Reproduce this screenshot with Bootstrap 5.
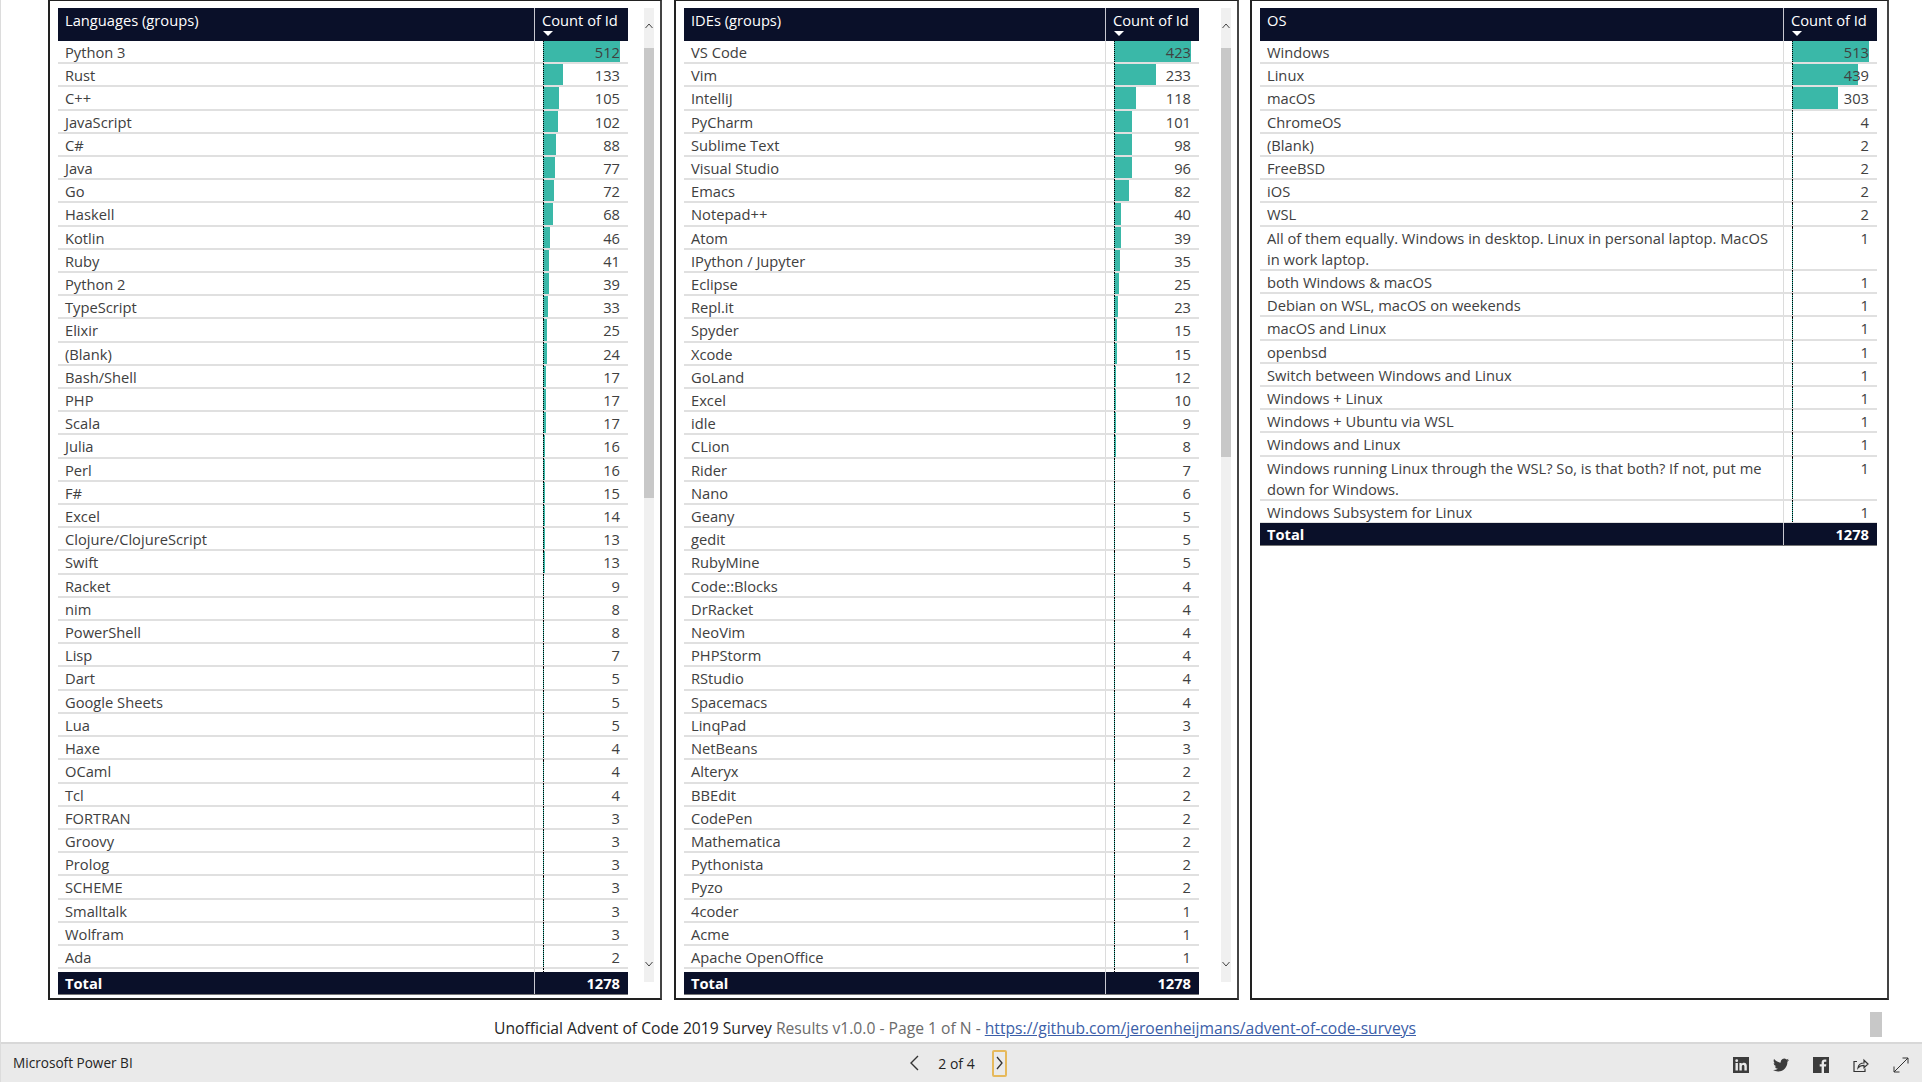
<!DOCTYPE html>
<html lang="en">
  <head>
    <meta charset="UTF-8" />
    <title>Unofficial Advent of Code 2019 Survey Results</title>
    <link
      rel="stylesheet"
      href="https://cdn.jsdelivr.net/npm/bootstrap@5.3.0/dist/css/bootstrap.min.css"
    />
    <style>
      html, body { height: 100%; overflow: hidden; }
      body {
        background: #fff;
        font-family: "Open Sans", "Liberation Sans", sans-serif;
        font-size: 14.7px;
        color: #404040;
        border-left: 1px solid #dcdcdc;
      }
      .report-area { height: 1000px; padding-left: 47px; gap: 12px; }
      .visual-box {
        height: 1000px;
        padding: 7px 6px 4px 8px;
        border: 2px solid #222;
        border-top-width: 1px;
        border-right-color: #444;
      }
      .box-lang { width: 614px; }
      .box-ide { width: 565px; }
      .box-os { width: 639px; margin-left: -1px; }
      .box-lang .data-table { width: 570px; }
      .box-ide .data-table { width: 515px; }
      .box-os .data-table { width: 617px; }

      .tbl-head { height: 33px; background: #0a1029; color: #fff; }
      .tbl-foot { height: 23px; background: #0a1029; color: #fff; font-weight: 700; border-bottom: 1px solid #777; }
      .cell-name { flex: 1 1 0; min-width: 0; padding: 0 8px 0 7px; }
      .cell-count { flex: 0 0 94px; position: relative; padding-right: 8px; text-align: right; border-left: 1px solid #dcdcdc; }
      .tbl-head .cell-name, .tbl-head .cell-count { padding-top: 2px; line-height: 20px; }
      .tbl-head .cell-count { border-left: 1px solid #c8c8d0; padding: 2px 0 0 7px; text-align: left; }
      .tbl-foot .cell-name, .tbl-foot .cell-count { line-height: 22px; }
      .tbl-foot .cell-count { border-left: 1px solid #c8c8d0; }

      .sort-mark {
        position: absolute; left: 8px; top: 23px;
        border-left: 5px solid transparent; border-right: 5px solid transparent; border-top: 5px solid #fff;
      }
      .tbl-body { height: 931px; overflow: hidden; }
      .box-os .tbl-body { height: 482px; }
      .tbl-row { min-height: 23.2px; line-height: 21.2px; border-bottom: 2px solid #e0e0e0; }
      .tbl-row .cell-name { position: relative; top: 1px; }
      .axis-line {
        position: absolute; left: 8px; top: 0; bottom: -2px;
        border-left: 1px dotted #000;
      }
      .data-bar { position: absolute; left: 8px; top: 0; bottom: 0; background: #3ab8a8; }
      .bar-value { position: relative; top: 1px; }

      .fake-scroll { width: 10px; height: 974px; margin-left: auto; background: #f0f0f0; position: relative; }
      .fake-scroll svg { position: absolute; left: 1px; }
      .arrow-up { top: 15px; }
      .arrow-down { bottom: 15px; }
      .scroll-thumb { position: absolute; left: 0; right: 0; top: 40px; background: #c8c8c8; }

      .footer-line { height: 42px; padding-top: 16px; padding-left: 493px; font-size: 15.66px; line-height: 24px; white-space: nowrap; color: #6b6b6b; }
      .footer-line b { font-weight: 400; color: #252525; }
      .footer-line a { color: #3b5ea8; }
      .page-box { position: absolute; left: 1870px; top: 1012px; width: 12px; height: 25px; background: #c8c8c8; }

      .pbi-bar { height: 40px; background: #eaeaea; border-top: 2px solid #d8d8d8; color: #252525; padding: 0 12px; position: relative; }
      .pbi-name { font-size: 13.6px; }
      .pager { position: absolute; left: 906px; top: 5px; height: 28px; font-size: 14px; }
      .pager-next { width: 15px; height: 27px; border: 2px solid #e6b95c; border-radius: 2px; }
      .pager-text { width: 71px; text-align: center; }
      .share-icons { position: absolute; left: 1732px; top: 13px; gap: 24px; }
    </style>
  </head>
  <body>
    <div class="report-area d-flex">
      <div class="visual-box box-lang d-flex" id="box-lang"></div>
      <div class="visual-box box-ide d-flex" id="box-ide"></div>
      <div class="visual-box box-os d-flex" id="box-os"></div>
    </div>
    <div class="footer-line">
      <b>Unofficial Advent of Code 2019 Survey</b> Results v1.0.0 - Page 1 of N -
      <a href="#">https://github.com/jeroenheijmans/advent-of-code-surveys</a>
    </div>
    <div class="page-box"></div>
    <div class="pbi-bar d-flex align-items-center">
      <span class="pbi-name">Microsoft Power BI</span>
      <div class="pager d-flex align-items-center">
        <svg width="14" height="20" viewBox="0 0 14 20"><path d="M11 3 L4 10 L11 17" fill="none" stroke="#333" stroke-width="1.4"/></svg>
        <span class="pager-text">2 of 4</span>
        <span class="pager-next d-flex align-items-center justify-content-center">
          <svg width="9" height="18" viewBox="0 0 9 18"><path d="M2 3 L7 9 L2 15" fill="none" stroke="#333" stroke-width="1.3"/></svg>
        </span>
      </div>
      <div class="share-icons d-flex align-items-center">
        <svg width="16" height="16" viewBox="0 0 16 16"><rect width="16" height="16" fill="#3c3c3c"/><rect x="2.5" y="6" width="2.4" height="7.5" fill="#eaeaea"/><circle cx="3.7" cy="3.7" r="1.4" fill="#eaeaea"/><path d="M6.4 6h2.3v1.1c.5-.8 1.3-1.3 2.4-1.3 2 0 2.7 1.3 2.7 3.3v4.4h-2.4V9.6c0-1-.3-1.7-1.2-1.7-1 0-1.4.7-1.4 1.7v3.9H6.4z" fill="#eaeaea"/></svg>
        <svg width="16" height="16" viewBox="0 0 24 24"><path fill="#3c3c3c" d="M23.953 4.57a10 10 0 01-2.825.775 4.958 4.958 0 002.163-2.723c-.951.555-2.005.959-3.127 1.184a4.92 4.92 0 00-8.384 4.482C7.69 8.095 4.067 6.13 1.64 3.162a4.822 4.822 0 00-.666 2.475c0 1.71.87 3.213 2.188 4.096a4.904 4.904 0 01-2.228-.616v.06a4.923 4.923 0 003.946 4.827 4.996 4.996 0 01-2.212.085 4.936 4.936 0 004.604 3.417 9.867 9.867 0 01-6.102 2.105c-.39 0-.779-.023-1.17-.067a13.995 13.995 0 007.557 2.209c9.053 0 13.998-7.496 13.998-13.985 0-.21 0-.42-.015-.63A9.935 9.935 0 0024 4.59z"/></svg>
        <svg width="16" height="16" viewBox="0 0 16 16"><rect width="16" height="16" fill="#3c3c3c"/><path d="M8.6 16V9.6H6.7V7.2h1.9V5.5c0-2 1.2-3 3-3 .8 0 1.5.1 1.7.1v2.1h-1.2c-.9 0-1.1.5-1.1 1.1v1.4h2.3l-.3 2.4h-2V16z" fill="#eaeaea"/></svg>
        <svg width="16" height="16" viewBox="0 0 16 16" fill="none" stroke="#333" stroke-width="1.2"><path d="M4 4.5H1v10h11v-3"/><path d="M5 11c.5-3.500 3-5 6-5V3.200l4 3.800-4 3.600V8.300c-2.500 0-4.500.8-6 2.700z"/></svg>
        <svg width="16" height="16" viewBox="0 0 16 16" fill="none" stroke="#333" stroke-width="1"><path d="M1 15 L15 1 M9.500 1 H15 V6.500 M1 9.500 V15 H6.500"/></svg>
      </div>
    </div>

    <script src="https://cdn.jsdelivr.net/npm/bootstrap@5.3.0/dist/js/bootstrap.bundle.min.js"></script>
    <script>
      // name|count per line, an empty line is the next row peeking out above the total
      const languages = `Python 3|512
Rust|133
C++|105
JavaScript|102
C#|88
Java|77
Go|72
Haskell|68
Kotlin|46
Ruby|41
Python 2|39
TypeScript|33
Elixir|25
(Blank)|24
Bash/Shell|17
PHP|17
Scala|17
Julia|16
Perl|16
F#|15
Excel|14
Clojure/ClojureScript|13
Swift|13
Racket|9
nim|8
PowerShell|8
Lisp|7
Dart|5
Google Sheets|5
Lua|5
Haxe|4
OCaml|4
Tcl|4
FORTRAN|3
Groovy|3
Prolog|3
SCHEME|3
Smalltalk|3
Wolfram|3
Ada|2
|`;

      const ides = `VS Code|423
Vim|233
IntelliJ|118
PyCharm|101
Sublime Text|98
Visual Studio|96
Emacs|82
Notepad++|40
Atom|39
IPython / Jupyter|35
Eclipse|25
Repl.it|23
Spyder|15
Xcode|15
GoLand|12
Excel|10
idle|9
CLion|8
Rider|7
Nano|6
Geany|5
gedit|5
RubyMine|5
Code::Blocks|4
DrRacket|4
NeoVim|4
PHPStorm|4
RStudio|4
Spacemacs|4
LinqPad|3
NetBeans|3
Alteryx|2
BBEdit|2
CodePen|2
Mathematica|2
Pythonista|2
Pyzo|2
4coder|1
Acme|1
Apache OpenOffice|1
|`;

      const systems = `Windows|513
Linux|439
macOS|303
ChromeOS|4
(Blank)|2
FreeBSD|2
iOS|2
WSL|2
All of them equally. Windows in desktop. Linux in personal laptop. MacOS in work laptop.|1
both Windows & macOS|1
Debian on WSL, macOS on weekends|1
macOS and Linux|1
openbsd|1
Switch between Windows and Linux|1
Windows + Linux|1
Windows + Ubuntu via WSL|1
Windows and Linux|1
Windows running Linux through the WSL? So, is that both? If not, put me down for Windows.|1
Windows Subsystem for Linux|1`;

      const BAR_MAX = 77;

      function renderVisual(targetId, title, raw, thumbHeight) {
        const rows = raw.split('\n').map((line) => line.split('|'));
        const max = Number(rows[0][1]);
        const rowHtml = rows
          .map(([name, count]) => {
            const width = (Number(count) / max) * BAR_MAX;
            return `
              <div class="tbl-row d-flex">
                <div class="cell-name">${name.replace('&', '&amp;')}</div>
                <div class="cell-count">
                  <span class="data-bar" style="width: ${width.toFixed(1)}px"></span>
                  <span class="axis-line"></span>
                  <span class="bar-value">${count}</span>
                </div>
              </div>`;
          })
          .join('');
        const scroll = thumbHeight
          ? `<div class="fake-scroll">
               <svg class="arrow-up" width="8" height="6" viewBox="0 0 8 6"><path d="M.5 5 L4 1 L7.500 5" fill="none" stroke="#444"/></svg>
               <div class="scroll-thumb" style="height: ${thumbHeight}px"></div>
               <svg class="arrow-down" width="8" height="6" viewBox="0 0 8 6"><path d="M.5 1 L4 5 L7.500 1" fill="none" stroke="#444"/></svg>
             </div>`
          : '';
        document.getElementById(targetId).innerHTML = `
          <div class="data-table">
            <div class="tbl-head d-flex">
              <div class="cell-name">${title}</div>
              <div class="cell-count">Count of Id<span class="sort-mark"></span></div>
            </div>
            <div class="tbl-body">${rowHtml}</div>
            <div class="tbl-foot d-flex">
              <div class="cell-name">Total</div>
              <div class="cell-count">1278</div>
            </div>
          </div>${scroll}`;
      }

      renderVisual('box-lang', 'Languages (groups)', languages, 450);
      renderVisual('box-ide', 'IDEs (groups)', ides, 409);
      renderVisual('box-os', 'OS', systems, 0);
    </script>
  </body>
</html>
